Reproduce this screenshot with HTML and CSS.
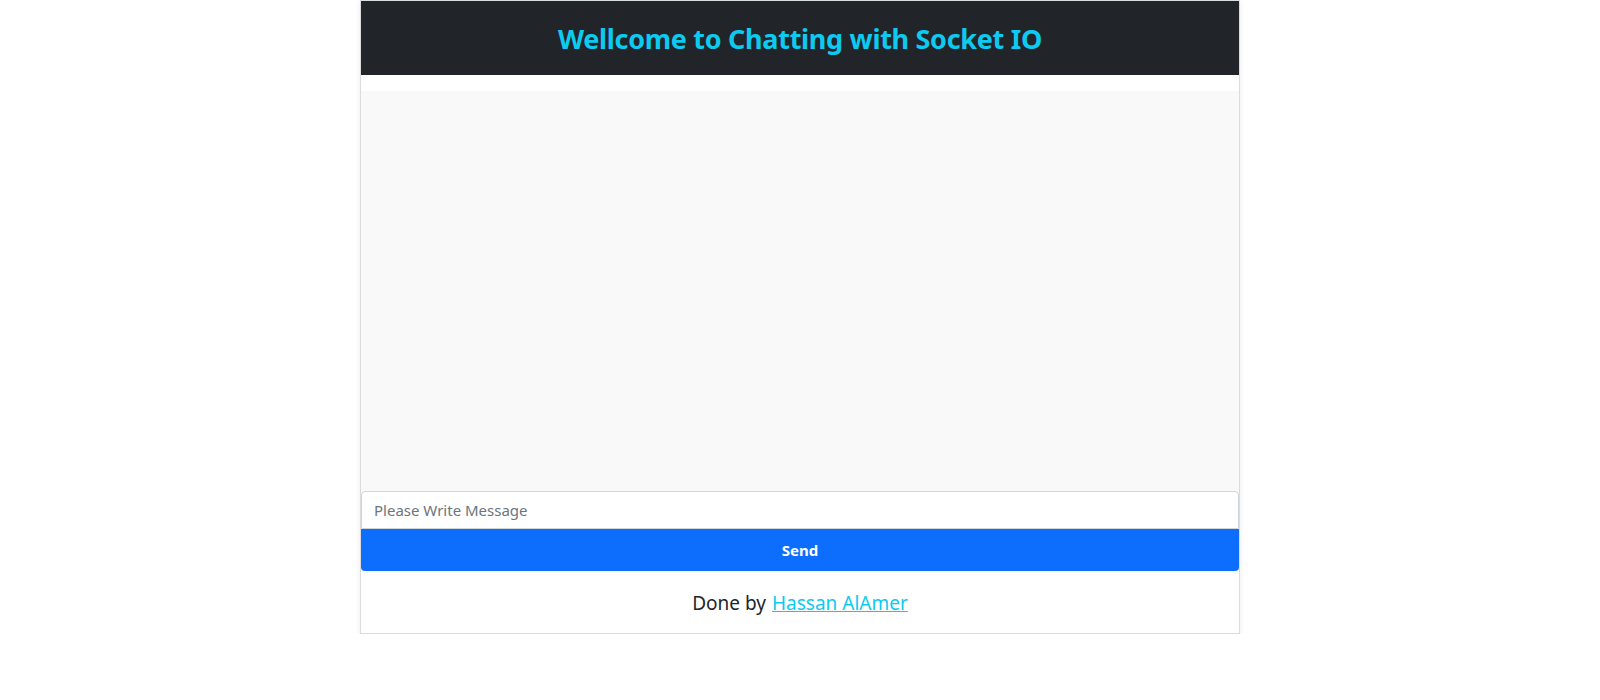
FILE: index.html
```html
<!DOCTYPE html>
<html lang="en">
<head>
<meta charset="utf-8">
<title>Chat</title>
<link rel="stylesheet" href="styles.css">
</head>
<body>
<div class="card">
  <header class="card-header">
    <h3 class="title">Wellcome to Chatting with Socket IO</h3>
  </header>
  <div class="chat-wrap">
    <div class="chat-box"></div>
  </div>
  <form class="send-form">
    <input class="msg-input" type="text" placeholder="Please Write Message">
    <button class="send-btn" type="button">Send</button>
  </form>
  <footer class="card-footer">
    Done by <a class="author" href="#">Hassan AlAmer</a>
  </footer>
</div>
</body>
</html>
```
FILE: styles.css
```css
* { box-sizing: border-box; }
body {
  margin: 0;
  font-family: "Noto Sans", "Open Sans", sans-serif;
  color: #212529;
  background: #fff;
}
.card {
  width: 880px;
  margin: 0 auto;
  border: 1px solid #dcdcdc;
  box-shadow: 0 2px 6px rgba(0,0,0,0.08);
  display: flex;
  flex-direction: column;
}
.card-header {
  background: #212529;
  height: 74px;
  display: flex;
  align-items: center;
  justify-content: center;
}
.title {
  margin: 0;
  color: #0dcaf0;
  font-size: 27px;
  font-weight: 700;
  letter-spacing: -0.3px;
}
.chat-wrap {
  padding-top: 16px;
  background: #fff;
}
.chat-box {
  height: 400px;
  background: #f9f9f9;
}
.send-form {
  display: flex;
  flex-direction: column;
  margin: 0;
}
.msg-input {
  height: 38px;
  border: 1px solid #ced4da;
  border-radius: 4px 4px 0 0;
  padding: 0 12px;
  font-family: inherit;
  font-size: 15px;
  color: #212529;
  outline: none;
}
.msg-input::placeholder { color: #6c757d; }
.send-btn {
  height: 42px;
  border: 0;
  border-radius: 0 0 4px 4px;
  background: #0d6efd;
  color: #fff;
  font-family: inherit;
  font-size: 15px;
  font-weight: 700;
}
.card-footer {
  height: 62px;
  padding-top: 2px;
  display: flex;
  align-items: center;
  justify-content: center;
  gap: 6px;
  font-size: 19px;
}
.author {
  color: #0dcaf0;
  text-decoration: underline;
}
```
